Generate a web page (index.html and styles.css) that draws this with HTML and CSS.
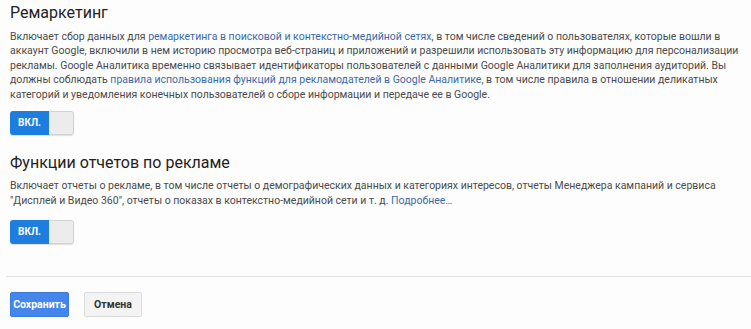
FILE: index.html
```html
<!DOCTYPE html>
<html lang="ru">
<head>
    <meta charset="UTF-8">
    <meta name="viewport" content="width=device-width, initial-scale=1.0">
    <title>Настройки сбора данных</title>
    <link rel="stylesheet" href="styles.css">
</head>
<body>
    <div class="settings">
        <div class="section">
            <h2>Ремаркетинг</h2>
            <p>Включает сбор данных для <a href="#">ремаркетинга в поисковой и контекстно-медийной сетях</a>, в том числе сведений о пользователях, которые вошли в аккаунт Google, включили в нем историю просмотра веб-страниц и приложений и разрешили использовать эту информацию для персонализации рекламы. Google Аналитика временно связывает идентификаторы пользователей с данными Google Аналитики для заполнения аудиторий. Вы должны соблюдать <a href="#">правила использования функций для рекламодателей в Google Аналитике</a>, в том числе правила в отношении деликатных категорий и уведомления конечных пользователей о сборе информации и передаче ее в Google.</p>
            <div class="toggle toggle-first"><span class="toggle-on">ВКЛ.</span><span class="toggle-off"></span></div>
        </div>

        <div class="section">
            <h2>Функции отчетов по рекламе</h2>
            <p>Включает отчеты о рекламе, в том числе отчеты о демографических данных и категориях интересов, отчеты Менеджера кампаний и сервиса "Дисплей и Видео 360", отчеты о показах в контекстно-медийной сети и т. д. <a href="#">Подробнее…</a></p>
            <div class="toggle"><span class="toggle-on">ВКЛ.</span><span class="toggle-off"></span></div>
        </div>

        <div class="actions">
            <button class="btn btn-primary">Сохранить</button>
            <button class="btn">Отмена</button>
        </div>
    </div>
</body>
</html>
```

FILE: styles.css
```css
body {
    margin: 0;
    background: #fdfdfd;
    font-family: Roboto, "Liberation Sans", Arial, sans-serif;
    color: #4a4a4a;
}
.section {
    padding: 0 6px 0 10px;
}
h2 {
    margin: 0;
    padding-top: 2px;
    font-size: 16px;
    font-weight: 400;
    color: #222;
    line-height: 22px;
}
.section + .section h2 {
    padding-top: 16.5px;
}
p {
    margin: 5.5px 0 0;
    font-size: 10.5px;
    line-height: 14.6px;
}
a {
    color: #3b69a8;
    text-decoration: none;
}
.toggle {
    display: flex;
    width: fit-content;
    margin-top: 11px;
    height: 24px;
    border-radius: 3px;
    overflow: hidden;
    box-shadow: 0 1px 1px rgba(0,0,0,0.12);
}
.toggle-first {
    margin-top: 9px;
}
.toggle-on {
    width: 39px;
    background: #1e7ee0;
    color: #fff;
    font-size: 10px;
    font-weight: 700;
    line-height: 24px;
    text-align: center;
}
.toggle-off {
    width: 24px;
    background: #ececec;
    border: 1px solid #d2d2d2;
    border-left: none;
    border-radius: 0 3px 3px 0;
}
.actions {
    margin: 32px 0 0 6px;
    padding: 15px 0 0 4px;
    border-top: 1px solid #e2e2e2;
    display: flex;
    gap: 15px;
}
.btn {
    height: 25px;
    width: 58px;
    padding: 0;
    border: 1px solid #dcdcdc;
    border-radius: 2px;
    background: #f3f3f3;
    color: #333;
    font-family: inherit;
    font-size: 10.5px;
    font-weight: 700;
}
.btn-primary {
    width: 59px;
    background: #4486ec;
    border-color: #3a7ad8;
    color: #fff;
}
```
